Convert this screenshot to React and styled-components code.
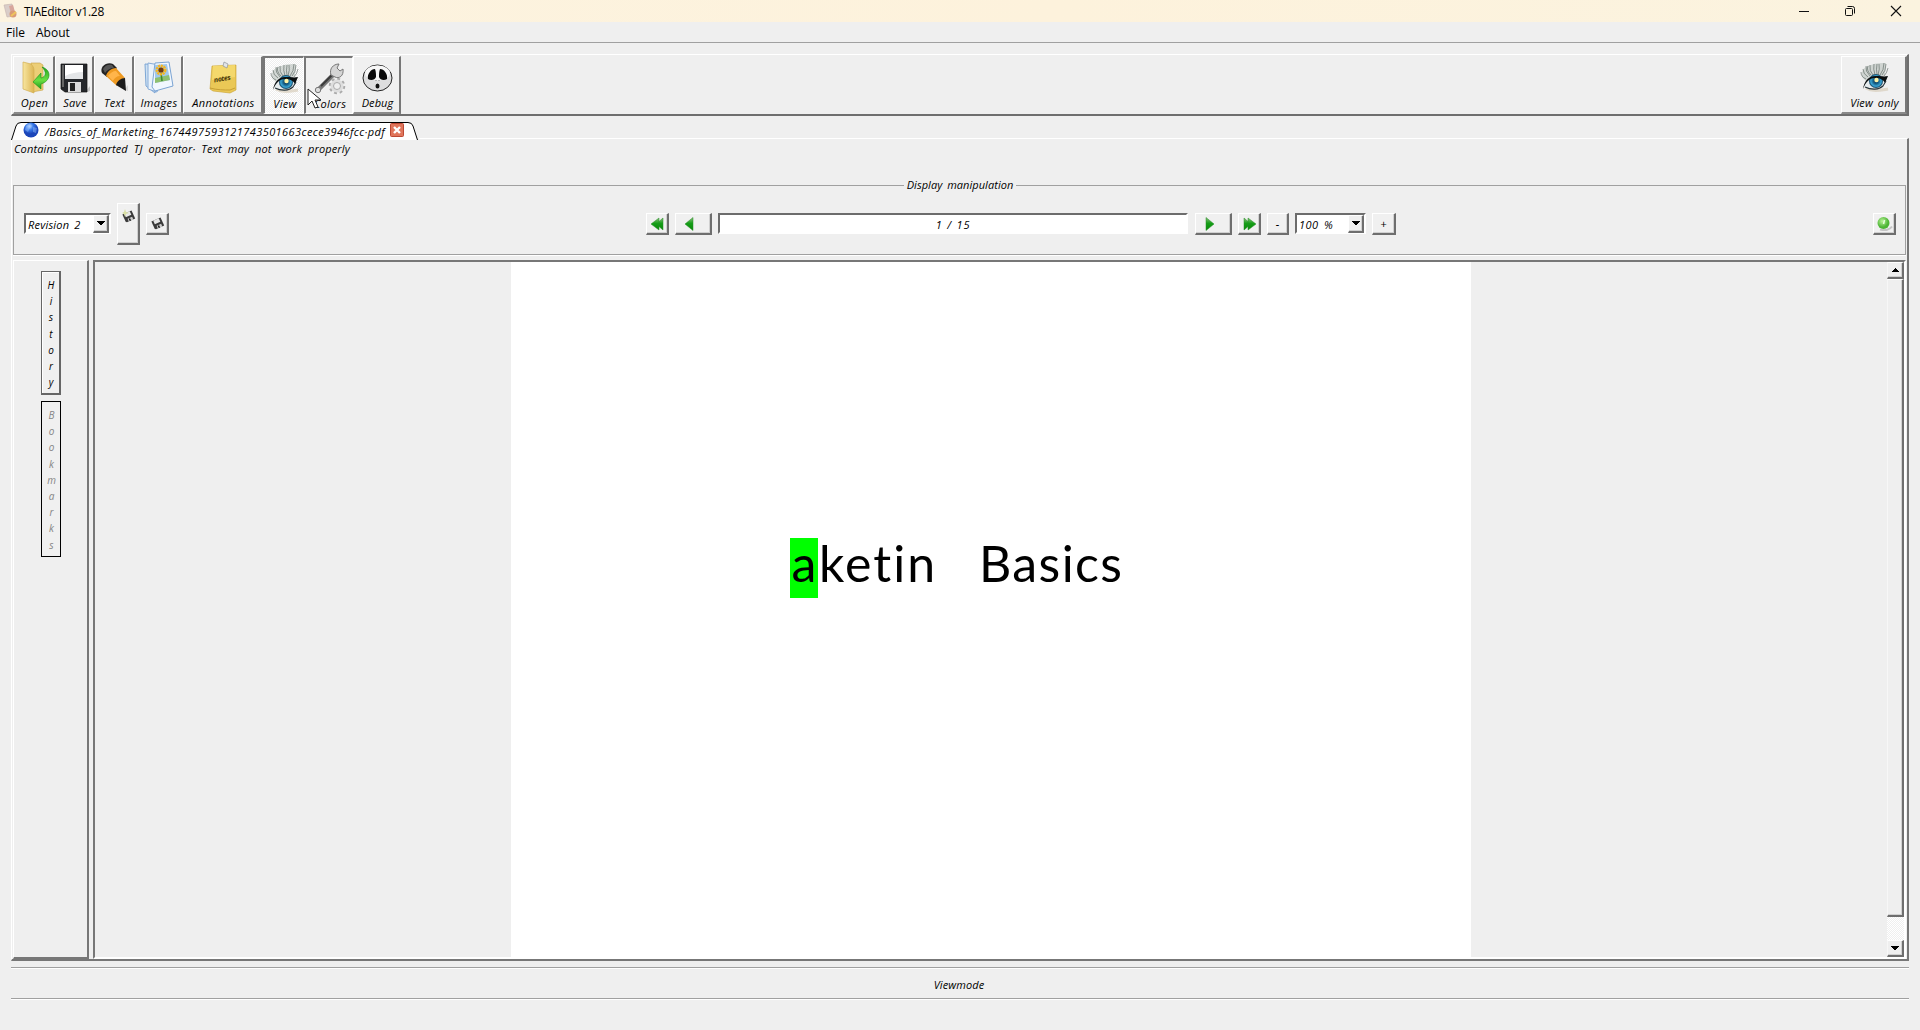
import React from "react";
import styled, { createGlobalStyle, css } from "styled-components";

const Global = createGlobalStyle`
  * { box-sizing: border-box; }
  html, body { margin: 0; padding: 0; }
  body { background: #efefef; overflow: hidden; }
`;

const hand = css`
  font-family: "Open Sans", "Noto Sans", sans-serif;
  font-style: italic;
  font-weight: 500;
  font-size: 11px;
  line-height: 14px;
  color: #000;
  white-space: pre;
`;
const raised = css`
  border-style: solid;
  border-width: 1px 2px 2px 1px;
  border-color: #fff #6e6e6e #6e6e6e #fff;
  box-shadow: inset -1px -1px 0 #d0d0d0;
`;
const sunken = css`
  border: 2px solid;
  border-color: #6c6c6c #fff #fff #6c6c6c;
`;
const dither = css`
  background: repeating-conic-gradient(#fff 0 25%, #efefef 0 50%) 0 0 / 2px 2px;
`;

const Window = styled.div`
  width: 1920px; height: 1030px; background: #efefef; display: flex; flex-direction: column;
  position: relative; overflow: hidden; ${hand}
`;
const TitleBar = styled.header`
  height: 22px; flex: none; background: linear-gradient(90deg, #fcf3e0, #fdf2dc 55%, #fbf3df);
  display: flex; align-items: center; padding: 0 18px 0 3px;
`;
const Title = styled.span`
  font: normal 12px/16px "Open Sans", "Noto Sans", sans-serif; letter-spacing: ${p => p.$track || 0}px;
  margin-left: 6px; flex: 1; padding-top: 1px;
`;
const WindowButtons = styled.div`display: flex; gap: 34px; svg { display: block; }`;
const MenuBar = styled.nav`
  height: 21px; flex: none; display: flex; gap: 11px; padding: 2px 0 0 6px; border-bottom: 1px solid #a0a0a0;
`;
const MenuItem = styled.span`font: normal 12px/17px "Open Sans", "Noto Sans", sans-serif;`;

const Main = styled.main`flex: 1; display: flex; flex-direction: column; padding: 11px 11px 0; min-height: 0;`;
const Toolbar = styled.div`
  height: 62px; flex: none; display: flex; border: 1px solid #fff; border-right: 2px solid #6e6e6e;
  border-bottom: 2px solid #6e6e6e; padding: 1px 0 0 1px;
`;
const Spacer = styled.div`flex: 1;`;
const ToolButton = styled.button`
  ${hand} width: ${p => p.$w}px; height: 58px; flex: none; background: #f0f0f0; border-radius: 0;
  display: flex; flex-direction: column; align-items: center; padding: 4px 0 0 2px;
  border: solid; border-width: 1px 2px 2px 1px; border-color: #fff #777 #8a8a8a #fff;
  ${p => p.$on && css`border-color: #777 #fff #fff #777; border-width: 2px 1px 1px 2px;`}
  ${p => p.$checked && dither}
  svg { display: block; flex: none; }
`;
const Label = styled.span`
  ${hand} letter-spacing: ${p => p.$ls || 0}px; word-spacing: ${p => p.$ws || 0}px; margin-top: ${p => p.$mt || 0}px;
`;

const TabStrip = styled.div`height: 24px; flex: none; display: flex; align-items: flex-end; padding-top: 6px;`;
const Tab = styled.div`position: relative; width: 408px; height: 18px; display: flex; align-items: center; padding-left: 12px;`;
const TabShape = styled.svg`position: absolute; left: 0; top: 0;`;
const TabContent = styled.div`position: relative; display: flex; align-items: center; width: 100%; padding-bottom: 2px;`;
const TabName = styled(Label)`width: 345px; margin-left: 6px; line-height: 16px; padding-top: 3px;`;
const TabRule = styled.div`flex: 1; height: 2px; border-top: 1px solid #fff; border-right: 2px solid #777;`;

const Pane = styled.section`
  height: 821px; flex: none; width: 1898px; border-left: 1px solid #fff; border-right: 2px solid #777;
  border-bottom: 2px solid #777; display: flex; flex-direction: column; padding: 0 0 0 1px;
`;
const Message = styled.div`height: 37px; flex: none; padding: 2px 0 0 1px;`;
const Group = styled.fieldset`
  margin: 0; width: 1893px; height: 78px; min-width: 0; border: 1px solid #a0a0a0; flex: none;
  box-shadow: 0 1px 0 #fff; padding: 10px 9px 0 10px;
`;
const Legend = styled.legend`${hand} margin: 0 auto; padding: 0 3px; height: 16px; line-height: 16px; word-spacing: 2px; letter-spacing: 0.05px;`;
const Controls = styled.div`display: flex; align-items: flex-start; width: 100%; height: 42px;`;
const Combo = styled.div`
  ${sunken} width: ${p => p.$w}px; height: 21px; margin: 10px 0 0 ${p => p.$ml || 0}px; background: #fff; display: flex;
  justify-content: space-between; padding-left: 2px; flex: none; span { line-height: 19px; }
`;
const ComboArrow = styled.div`
  ${raised} width: 16px; height: 18px; background: #f0f0f0; display: flex; align-items: center; justify-content: center;
`;
const SmallButton = styled.button`
  ${hand} ${raised} width: ${p => p.$w || 23}px; height: ${p => p.$h || 22}px; margin: ${p => p.$mt ?? 10}px 0 0 ${p => p.$ml || 0}px;
  background: #f0f0f0; border-radius: 0; padding: 0 ${p => p.$pr || 0}px ${p => p.$pb || 0}px 0; display: flex; align-items: center; justify-content: center; flex: none;
  svg { display: block; }
`;
const PageField = styled.div`
  ${sunken} width: 470px; height: 21px; margin: 10px 0 0 6px; background: #fff; text-align: center; flex: none;
  span { line-height: 19px; }
`;

const Work = styled.div`flex: 1; display: flex; margin-top: 5px; min-height: 0;`;
const Side = styled.aside`
  width: 76px; border: solid; border-width: 1px 2px 2px 1px; border-color: #fff #777 #777 #fff; display: flex; flex-direction: column;
  padding: 10px 0 0 27px; gap: 6px;
`;
const SideButton = styled.button`
  ${hand} font-size: 10px; width: 20px; height: ${p => p.$h}px; padding: 5px 0 0 1px; border-radius: 0; flex: none;
  display: flex; flex-direction: column; align-items: center; background: #f0f0f0;
  border: 1px solid #666; border-right-width: 2px; border-bottom-width: 2px; box-shadow: inset 1px 1px 0 #fff;
  ${p => p.$off && css`border: 1px solid #000; color: #858585; box-shadow: none;`}
  span { height: 16.2px; line-height: 16px; }
`;
const Viewer = styled.div`${sunken} border-color: #777 #fff #fff #777; width: 1813px; margin-left: 4px; display: flex; background: #efefef;`;
const Desk = styled.div`flex: 1; display: flex; padding-left: 416px;`;
const Sheet = styled.div`width: 960px; background: #fff; padding: 276px 0 0 279px; display: flex; align-items: flex-start;`;
const Glyphs = styled.span`
  font: normal 50px/51px Lato, "Open Sans", sans-serif; height: 60px; color: #000; letter-spacing: ${p => p.$ls || 0}px;
  margin-left: ${p => p.$ml || 0}px;
`;
const Marked = styled(Glyphs)`background: #00ff00; width: 28px; text-align: center;`;
const ScrollBar = styled.div`width: 17px; ${dither} display: flex; flex-direction: column;`;
const ScrollPart = styled.div`
  ${raised} border-left-color: #f7f7f7; height: ${p => p.$h}px; background: #efefef; display: flex; align-items: center; justify-content: center;
`;
const Footer = styled.footer`
  margin-top: 6px; height: 32px; border-top: 1px solid #a0a0a0; border-bottom: 1px solid #a0a0a0; text-align: center;
  box-shadow: inset 0 1px 0 #fff, 0 1px 0 #fff; padding: 10px 2px 0 0; width: 1898px;
`;
const Pointer = styled.svg`position: absolute; left: 307px; top: 88px;`;

const Arrow = ({ up }) => (
  <svg width="8" height="5" shapeRendering="crispEdges"><path d={up ? "M4 0L8 4H0z" : "M0 0H8L4 4.5z"} /></svg>
);

const FolderIcon = () => (
  <svg width="32" height="34" viewBox="0 0 32 34">
    <defs><linearGradient id="fo"><stop stopColor="#f8e6a0" /><stop offset="1" stopColor="#dcb553" /></linearGradient>
      <linearGradient id="fg" x2="0" y2="1"><stop stopColor="#24a51c" /><stop offset=".6" stopColor="#6adf43" /><stop offset="1" stopColor="#1e9a19" /></linearGradient></defs>
    <path d="M12 2h9l3 2v25l-11 2z" fill="#ecce77" stroke="#c9a343" strokeWidth=".6" />
    <path d="M4 1l8 2c2 2 3 4 3 6v23L4 28z" fill="url(#fo)" stroke="#d2af51" strokeWidth=".7" />
    <path d="M23 6c10 3 9 14-1 17v5l-8-7 8-9v5c5-1 6-6 1-11z" fill="url(#fg)" stroke="#189018" strokeWidth=".6" />
  </svg>
);
const SaveIcon = () => (
  <svg width="32" height="34" viewBox="0 0 32 34">
    <path d="M26 31l5-6v5l-3 1z" fill="#c6c6c6" />
    <path d="M2 3h26v28H6l-4-3z" fill="#25272b" stroke="#111" strokeWidth=".7" />
    <path d="M6 4h18v14H6z" fill="#e4e6e8" /><path d="M6 4h18v7c-6 0-12 1-18 4z" fill="#fff" />
    <path d="M9 21h13v10H9z" fill="#dcdcdc" /><path d="M11 22h5v8h-5z" fill="#222" /><path d="M3 4h2v22H3z" fill="#666" />
  </svg>
);
const PencilIcon = () => (
  <svg width="32" height="34" viewBox="0 0 32 34">
    <path d="M25 29l4-5v6z" fill="#d4d4d4" />
    <path d="M3 12C0 6 8 0 14 3l4 4-10 9z" fill="#242424" /><path d="M4 8c2-4 6-5 9-4l2 3c-4 0-7 2-9 5z" fill="#555" />
    <path d="M7 15c1-4 5-8 10-8l9 10c-4 1-7 4-8 8z" fill="#ee9a22" /><path d="M9 15c2-3 5-5 8-5l4 5c-3 0-6 2-7 5z" fill="#ffb54a" />
    <path d="M17 24c1-4 5-7 9-7l1 13z" fill="#1b1b1b" />
  </svg>
);
const ImagesIcon = () => (
  <svg width="32" height="34" viewBox="0 0 32 34">
    <path d="M2 3l13 1-3 28L3 25z" fill="#cfe2f4" stroke="#7ca6d5" /><path d="M5 2l17 3-8 26-9-3z" fill="#e9f2fb" stroke="#88acd8" />
    <path d="M12 2l14-1 4 24-18 5-3-4z" fill="#f1f7fe" stroke="#7ba4d3" /><path d="M12 4l12-1 3 16-15 3z" fill="#9fc8ef" />
    <path d="M12 17l14-3 1 5-15 3z" fill="#8fc070" /><path d="M18 12l1 8" stroke="#3e8a2c" strokeWidth="1.700" />
    <circle cx="18" cy="9" r="4" fill="none" stroke="#f6b51e" strokeWidth="3" strokeDasharray="2 .6" /><circle cx="18" cy="9" r="2.600" fill="#6d3b12" />
  </svg>
);
const NoteText = styled.text`font: italic 700 7px "Open Sans", sans-serif;`;
const NotesIcon = () => (
  <svg width="32" height="34" viewBox="0 0 32 34">
    <path d="M4 5l24-1v25l-6 3-17-2-3-2z" fill="#eac856" stroke="#c8a02c" strokeWidth=".6" /><path d="M5 5l22-1v12L4 19z" fill="#f4d86c" />
    <path d="M2 27c7 2 14 2 20 2l5-2" fill="none" stroke="#c79f35" /><path d="M15 5l1-4 4 2-1 4z" fill="#e2e5e9" stroke="#8c9299" strokeWidth=".7" />
    <NoteText x="6" y="20" fill="#493909" transform="rotate(-10 15 19)" textLength="17">notes</NoteText>
  </svg>
);
const EyeIcon = () => (
  <svg width="34" height="34" viewBox="0 0 34 34">
    <defs><radialGradient id="ey"><stop stopColor="#0c3450" /><stop offset=".4" stopColor="#175f87" /><stop offset=".75" stopColor="#3aa6d6" /><stop offset="1" stopColor="#0b3652" /></radialGradient></defs>
    <path d="M4 16C3 9 7 5 13 4c5-2 11-2 15-2l-1 12-18 7z" fill="#aeb8b2" opacity=".5" />
    <path d="M8 27c7 4 15 2 22 1" stroke="#d7cdbb" strokeWidth="3" fill="none" opacity=".7" />
    <path d="M6 26c3-9 8-11 14-11 4 0 7 1 9 3l-4 6c-4 4-11 4-19 2z" fill="#e6ecee" />
    <circle cx="18" cy="20" r="7" fill="url(#ey)" />
    <path d="M5 28c1-8 6-14 14-13 4 0 7 1 11 0l-3 7c-2-4-6-5-10-5-6 0-9 4-12 11z" fill="#0b0f10" />
    <path d="M7 26c6 3 14 3 18-1l3-5" stroke="#26333a" strokeWidth="1.100" fill="none" />
    <path d="M8 18Q3 16 3 11M10 16Q5 13 5 8M12 15Q7 10 8 5M15 14Q11 10 12 4M17 14Q15 8 16 3M20 14q2-6 1-11M22 14q4-5 4-12M24 14q4-4 4-11M26 15q3-3 4-8M13 14Q8 9 10 5M19 13q-1-4 0-10" stroke="#48554f" strokeWidth=".55" fill="none" />
    <circle cx="18.500" cy="19" r="2.200" fill="#fff5a8" />
  </svg>
);
const ToolsIcon = () => (
  <svg width="34" height="34" viewBox="0 0 34 34">
    <path d="M5 28L21 12" stroke="#777" strokeWidth="4.500" strokeLinecap="round" /><path d="M8 24L20 12" stroke="#3a3a3a" strokeWidth="2" />
    <path d="M18 13c-2-6 2-11 8-11l-2 4 3 3 3-2c1 7-4 10-8 8z" fill="#d5d5d5" stroke="#777" />
    <circle cx="5" cy="28" r="2.700" fill="#ddd" stroke="#777" />
    <circle cx="24" cy="24" r="7" fill="none" stroke="#aaa" strokeWidth="2.500" strokeDasharray="2.800 2.700" />
    <circle cx="24" cy="24" r="5" fill="none" stroke="#dedede" strokeWidth="3" /><circle cx="24" cy="24" r="3.500" fill="#efefef" stroke="#aaa" />
  </svg>
);
const MaskIcon = () => (
  <svg width="34" height="34" viewBox="0 0 34 34">
    <ellipse cx="16.500" cy="17" rx="14.500" ry="13" fill="#dededf" stroke="#242424" /><ellipse cx="16.500" cy="12" rx="12.500" ry="7.500" fill="#f7f7f7" />
    <path d="M14 8C10 8 6 13 7 18c3 2 7 1 8-2 0-3 0-5-1-8zM19 8c4 0 8 5 7 10-3 2-7 1-8-2 0-3 0-5 1-8z" fill="#090909" />
    <path d="M15.500 19l-1 1M17.500 19l1 1" stroke="#888" /><ellipse cx="16.500" cy="25" rx="2" ry="2.600" fill="#111" />
  </svg>
);
const Globe = () => (
  <svg width="16" height="16" viewBox="0 0 16 16">
    <defs><radialGradient id="gl" cx=".4" cy=".25"><stop stopColor="#b9d9ff" /><stop offset=".5" stopColor="#397ae9" /><stop offset="1" stopColor="#1b45b9" /></radialGradient></defs>
    <circle cx="8" cy="8" r="7.500" fill="url(#gl)" /><path d="M3 4l4-2 2 2-2 2-2 4-3-2zM10 5l4 1-1 5-3-1z" fill="#9bc4ff" opacity=".45" />
  </svg>
);
const CloseIcon = () => (
  <svg width="14" height="14"><rect x=".5" y=".5" width="13" height="13" rx="1" fill="#e0755b" stroke="#bd4934" /><path d="M4 4l6 6M10 4l-6 6" stroke="#fff" strokeWidth="2.400" /></svg>
);
const Disk = ({ spark }) => (
  <svg width="15" height="15" viewBox="0 0 15 15">
    <g transform="rotate(-24 8 8)"><path d="M3 3h10v9H4l-1-1z" fill="#3a3a3a" /><path d="M5 3h6v4H5z" fill="#e7e7e7" /><path d="M6 9h5v3H6z" fill="#ccc" /><path d="M7 9.500h1.500V12H7z" fill="#111" /></g>
    {spark && <path d="M4 0l1 3 3 1-3 1-1 3-1-3-2-1 2-1z" fill="#d9dfa5" />}
  </svg>
);
const Nav = ({ double, back }) => (
  <svg width="15" height="14" viewBox="0 0 15 14">
    <defs><linearGradient id="nv" x2="0" y2="1"><stop stopColor="#8bbf7c" /><stop offset=".45" stopColor="#159e17" /><stop offset="1" stopColor="#098909" /></linearGradient></defs>
    <g transform={back ? "translate(15 0) scale(-1 1)" : undefined} fill="url(#nv)" stroke="#258d25" strokeWidth=".5">
      {double ? <><path d="M2 1l7 6-7 6z" /><path d="M6 1l8 6-8 6z" /></> : <path d="M4 .5L12 7l-8 6.500z" />}
    </g>
  </svg>
);
const Orb = () => (
  <svg width="17" height="15" viewBox="0 0 17 15"><defs><radialGradient id="ob" cx=".4" cy=".35"><stop stopColor="#b9f397" /><stop offset="1" stopColor="#4db535" /></radialGradient></defs>
    <path d="M4 13.500c5 1.500 10 0 12-3" stroke="#c5c5c5" strokeWidth="2" fill="none" /><circle cx="7.500" cy="7" r="6" fill="url(#ob)" /><path d="M8.500 4l-1 4" stroke="#e6ffdc" strokeWidth="1.500" /></svg>
);
const AppIcon = () => (
  <svg width="15" height="16" viewBox="0 0 15 16"><path d="M1 2l8-1 3 12-8 1z" fill="#d9cdc9" stroke="#c4b2ac" strokeWidth=".6" /><path d="M6 3l4-1 2 7-4 2z" fill="#d8a69c" /><circle cx="10" cy="11" r="3.500" fill="#d99a77" /><path d="M8 13l5-4" stroke="#efc45d" strokeWidth="2" /></svg>
);

const tools = [
  { name: "Open", w: 42, icon: FolderIcon }, { name: "Save", w: 39, icon: SaveIcon }, { name: "Text", w: 40, icon: PencilIcon },
  { name: "Images", w: 49, icon: ImagesIcon, ls: 0.4 }, { name: "Annotations", w: 80, icon: NotesIcon, ls: 0.35 },
  { name: "View", w: 41, icon: EyeIcon, on: true, checked: true }, { name: "Colors", w: 49, icon: ToolsIcon, on: true }, { name: "Debug", w: 48, icon: MaskIcon, ls: 0.1 },
];

export default function App() {
  return (
    <Window>
      <Global />
      <TitleBar>
        <AppIcon /><Title $track={-0.25}>TIAEditor v1.28</Title>
        <WindowButtons>
          <svg width="12" height="12"><path d="M1 6.500h10" stroke="#111" /></svg>
          <svg width="12" height="12" fill="none" stroke="#111"><rect x="1.500" y="3.500" width="7" height="7" rx="1" /><path d="M3.500 1.500h5q2 0 2 2v5" /></svg>
          <svg width="12" height="12"><path d="M1 1l10 10M11 1L1 11" stroke="#111" strokeWidth="1.100" /></svg>
        </WindowButtons>
      </TitleBar>
      <MenuBar><MenuItem>File</MenuItem><MenuItem>About</MenuItem></MenuBar>
      <Main>
        <Toolbar>
          {tools.map(({ name, w, icon: Icon, on, checked, ls }) => (
            <ToolButton key={name} $w={w} $on={on} $checked={checked}><Icon /><Label $ls={ls ?? 0.3} $mt={1}>{name}</Label></ToolButton>
          ))}
          <Spacer />
          <ToolButton $w={66}><EyeIcon /><Label $ls={0.1} $ws={2} $mt={1}>View only</Label></ToolButton>
        </Toolbar>
        <TabStrip>
          <Tab>
            <TabShape width="408" height="18"><path d="M.5 18L5 4Q6 .5 10 .5H397Q401 .5 402 4L406.500 18" fill="#fff" stroke="#000" /></TabShape>
            <TabContent><Globe /><TabName $ls={0.41}>/Basics_of_Marketing_1674497593121743501663cece3946fcc·pdf</TabName><CloseIcon /></TabContent>
          </Tab>
          <TabRule />
        </TabStrip>
        <Pane>
          <Message><Label $ls={0.14} $ws={3}>Contains unsupported TJ operator· Text may not work properly</Label></Message>
          <Group>
            <Legend>Display manipulation</Legend>
            <Controls>
              <Combo $w={87}><Label $ls={0.2} $ws={2}>Revision 2</Label><ComboArrow><Arrow /></ComboArrow></Combo>
              <SmallButton $h={42} $mt={0} $ml={6} $pb={14}><Disk spark /></SmallButton>
              <SmallButton $ml={6}><Disk /></SmallButton>
              <SmallButton $ml={477}><Nav double back /></SmallButton>
              <SmallButton $ml={6} $w={37} $pr={8}><Nav back /></SmallButton>
              <PageField><Label $ls={0.8} $ws={1}>1 / 15</Label></PageField>
              <SmallButton $ml={7} $w={37} $pr={8}><Nav /></SmallButton>
              <SmallButton $ml={6}><Nav double /></SmallButton>
              <SmallButton $ml={6} $w={22}>-</SmallButton>
              <Combo $w={71} $ml={6}><Label $ls={0.5} $ws={2}>100 %</Label><ComboArrow><Arrow /></ComboArrow></Combo>
              <SmallButton $ml={6} $w={24}>+</SmallButton>
              <Spacer />
              <SmallButton><Orb /></SmallButton>
            </Controls>
          </Group>
          <Work>
            <Side>
              <SideButton $h={124}>{[..."History"].map((c, i) => <span key={i}>{c}</span>)}</SideButton>
              <SideButton $h={156} $off>{[..."Bookmarks"].map((c, i) => <span key={i}>{c}</span>)}</SideButton>
            </Side>
            <Viewer>
              <Desk><Sheet><Marked>a</Marked><Glyphs $ls={2} $ml={1}>ketin</Glyphs><Glyphs $ml={42} $ls={1.4}>Basics</Glyphs></Sheet></Desk>
              <ScrollBar><ScrollPart $h={17}><Arrow up /></ScrollPart><ScrollPart $h={638} /><Spacer /><ScrollPart $h={17}><Arrow /></ScrollPart></ScrollBar>
            </Viewer>
          </Work>
        </Pane>
        <Footer><Label $ls={0.1}>Viewmode</Label></Footer>
      </Main>
      <Pointer width="16" height="24" viewBox="0 0 16 24"><path d="M1 1v16l4-4 3 7 3-1-3-7h6z" fill="#fff" stroke="#222" /></Pointer>
    </Window>
  );
}
